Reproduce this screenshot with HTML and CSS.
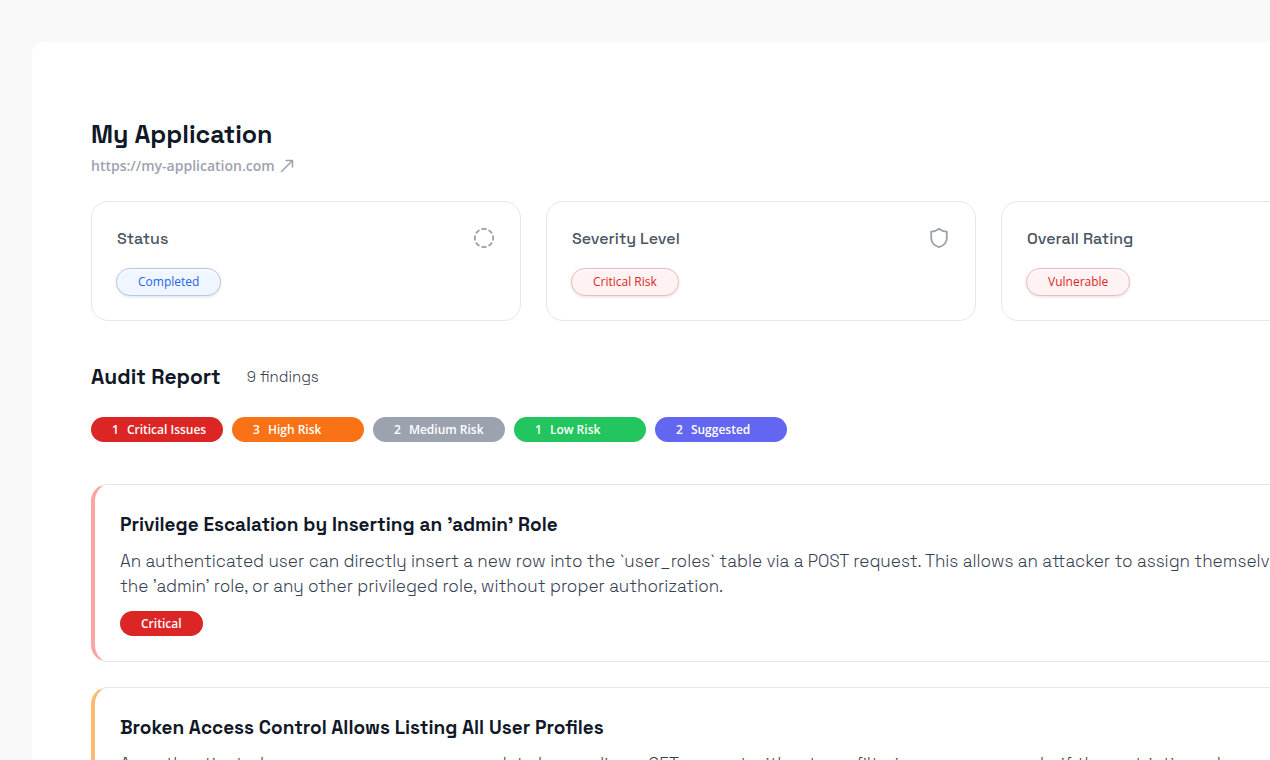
FILE: index.html
```html
<!DOCTYPE html>
<html lang="en">

<head>
    <meta charset="UTF-8" />
    <meta name="viewport" content="width=device-width, initial-scale=1.0" />
    <title>Audit Report | My Application</title>
    <link rel="stylesheet" href="styles.css">
</head>

<body>

    <main class="report">
        <header>
            <h1>My Application</h1>
            <a class="site-link" href="https://my-application.com">
                https://my-application.com
                <svg width="14" height="14" viewBox="0 0 14 14" aria-hidden="true">
                    <path d="M1.500 12.500L12.500 1.500M6 1.500H12.500V8" />
                </svg>
            </a>
        </header>

        <section class="cards">
            <div class="card">
                <div class="card-top">
                    <h3>Status</h3>
                    <svg class="icon" width="22" height="22" viewBox="0 0 24 24" aria-hidden="true">
                        <path d="M10.1 2.18a9.93 9.93 0 0 1 3.8 0M17.6 3.71a9.95 9.95 0 0 1 2.69 2.7M21.82 10.1a9.93 9.93 0 0 1 0 3.8M20.29 17.6a9.95 9.95 0 0 1-2.7 2.69M13.9 21.82a9.94 9.94 0 0 1-3.8 0M6.4 20.29a9.95 9.95 0 0 1-2.69-2.7M2.18 13.9a9.93 9.93 0 0 1 0-3.8M3.71 6.4a9.95 9.95 0 0 1 2.7-2.69" />
                    </svg>
                </div>
                <span class="badge blue">Completed</span>
            </div>
            <div class="card">
                <div class="card-top">
                    <h3>Severity Level</h3>
                    <svg class="icon" width="22" height="22" viewBox="0 0 24 24" aria-hidden="true">
                        <path d="M12 22c5-1.500 8.500-4.500 8.500-10V5C17 5 14.500 4 12 2 9.500 4 7 5 3.500 5v7c0 5.500 3.500 8.500 8.500 10z" />
                    </svg>
                </div>
                <span class="badge red">Critical Risk</span>
            </div>
            <div class="card">
                <div class="card-top">
                    <h3>Overall Rating</h3>
                </div>
                <span class="badge red">Vulnerable</span>
            </div>
        </section>

        <section>
            <div class="audit-title">
                <h2>Audit Report</h2>
                <span>9 findings</span>
            </div>

            <div class="counts">
                <span class="count critical"><b>1</b>Critical Issues</span>
                <span class="count high"><b>3</b>High Risk</span>
                <span class="count medium"><b>2</b>Medium Risk</span>
                <span class="count low"><b>1</b>Low Risk</span>
                <span class="count suggested"><b>2</b>Suggested</span>
            </div>

            <article class="finding finding-critical">
                <h3>Privilege Escalation by Inserting an ’admin’ Role</h3>
                <p>An authenticated user can directly insert a new row into the `user_roles` table via a POST request. This allows an attacker to assign themselves<br>
                the ’admin’ role, or any other privileged role, without proper authorization.</p>
                <span class="tag critical">Critical</span>
            </article>

            <article class="finding finding-high">
                <h3>Broken Access Control Allows Listing All User Profiles</h3>
                <p>An authenticated user can access every user data by sending a GET request without any filtering on user records, if the restricting rules are loose.</p>
                <span class="tag high">High</span>
            </article>
        </section>
    </main>

</body>

</html>
```

FILE: styles.css
```css
* {
    box-sizing: border-box;
}

body {
    margin: 0;
    padding: 42px 32px;
    font-family: "Space Grotesk", Inter, sans-serif;
    background-color: #f9f9f9;
    color: #111827;
    overflow: hidden;
}

h1, h2, h3, p {
    margin: 0;
}

h1, h2, h3 {
    font-weight: 600;
}

.report {
    min-width: 1459px;
    padding: 76px 60px 60px 59px;
    background-color: white;
    border-radius: 12px;
}

h1 {
    font-size: 25px;
    line-height: 32px;
}

.site-link {
    display: inline-flex;
    align-items: center;
    gap: 5px;
    margin-top: 4px;
    font-family: "Segoe UI", "Open Sans", sans-serif;
    font-size: 14px;
    font-weight: 600;
    line-height: 24px;
    color: #9ca3af;
    text-decoration: none;
}

svg {
    fill: none;
    stroke: #9ca3af;
    stroke-width: 1.5;
    stroke-linecap: round;
    stroke-linejoin: round;
}

.icon {
    stroke-width: 2;
}

/* Summary cards */
.cards {
    display: grid;
    grid-template-columns: repeat(3, 1fr);
    gap: 25px;
    margin-top: 23px;
}

.card {
    padding: 24px;
    border: 1px solid #e5e7eb;
    border-radius: 17px;
}

.card-top {
    display: flex;
    align-items: center;
    justify-content: space-between;
    height: 24px;
    margin-bottom: 18px;
    padding: 0 1px;
}

.card-top h3 {
    font-size: 16px;
    font-weight: 500;
    color: #4b5563;
}

.badge {
    display: block;
    width: fit-content;
    padding: 0 21px;
    border: 1px solid;
    border-radius: 14px;
    font-family: "Segoe UI", "Open Sans", sans-serif;
    font-size: 12px;
    line-height: 26px;
    box-shadow: 0 1px 3px rgba(0, 0, 0, 0.12), inset 0 2px 3px rgba(255, 255, 255, 0.7);
}

.blue {
    background-color: #eff6ff;
    border-color: #b4c9f0;
    color: #2563eb;
}

.red {
    background-color: #fef2f2;
    border-color: #eebcbc;
    color: #dc2626;
}

/* Audit report */
.audit-title {
    display: flex;
    align-items: center;
    gap: 26px;
    margin: 41px 0 25px;
    line-height: 30px;
}

.audit-title h2 {
    font-size: 21px;
}

.audit-title span {
    font-size: 15px;
    font-weight: 300;
    color: #374151;
}

.counts {
    display: flex;
    gap: 9px;
    margin-bottom: 42px;
}

.count, .tag {
    font-family: "Segoe UI", "Open Sans", sans-serif;
    font-size: 12px;
    font-weight: 600;
    line-height: 25px;
    border-radius: 13px;
    color: white;
}

.count {
    width: 132px;
    padding-left: 21px;
    white-space: nowrap;
}

.count b {
    margin-right: 8px;
    font-weight: 600;
}

.tag {
    display: block;
    width: fit-content;
    padding: 0 21px;
}

.critical {
    background-color: #dc2626;
}

.high {
    background-color: #f97316;
}

.medium {
    background-color: #9ca3af;
}

.low {
    background-color: #22c55e;
}

.suggested {
    background-color: #6366f1;
}

.finding {
    margin-bottom: 25px;
    padding: 25px;
    border: 1px solid #e5e7eb;
    border-left: 4px solid;
    border-radius: 17px;
}

.finding h3 {
    font-size: 19px;
    line-height: 30px;
}

.finding p {
    margin: 9px 0 12px;
    font-size: 17px;
    font-weight: 300;
    line-height: 25px;
    color: #374151;
}

.finding-critical {
    border-left-color: #fca5a5;
}

.finding-high {
    border-left-color: #fdba74;
}
```
